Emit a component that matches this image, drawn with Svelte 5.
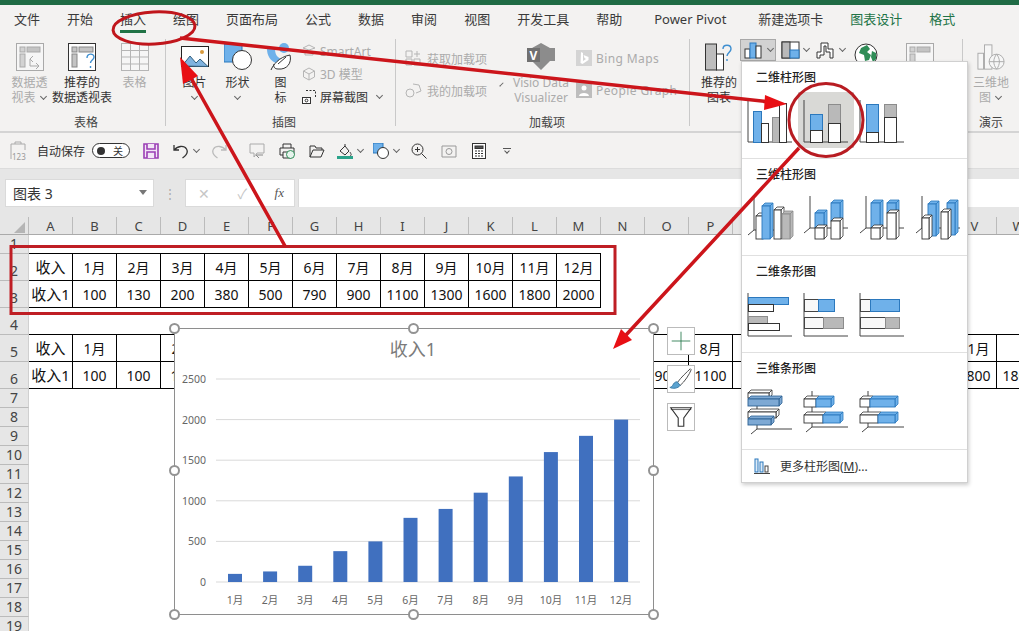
<script>
  const tabs = [
    { t: '文件' }, { t: '开始' }, { t: '插入', on: true }, { t: '绘图' }, { t: '页面布局' }, { t: '公式' },
    { t: '数据' }, { t: '审阅' }, { t: '视图' }, { t: '开发工具' }, { t: '帮助' }, { t: 'Power Pivot', wide: true },
    { t: '新建选项卡' }, { t: '图表设计', green: true }, { t: '格式', green: true }
  ];

  const letters = 'ABCDEFGHIJKLMNOPQRSTUVW'.split('');
  const vals = [100, 130, 200, 380, 500, 790, 900, 1100, 1300, 1600, 1800, 2000];
  const months = vals.map((_, i) => i + 1 + '月');
  const blank = (n) => Array(n).fill('');

  // sheet rows, cell borders are driven by "kind"
  const rows = [
    { n: 1, h: 19, cells: blank(13), kind: 'under' },
    { n: 2, h: 27, cells: ['收入', ...months], kind: 'box' },
    { n: 3, h: 27, cells: ['收入1', ...vals], kind: 'box' },
    { n: 4, h: 27, cells: blank(23), kind: 'under' },
    { n: 5, h: 27, cells: ['收入', '1月', '', '2月', ...blank(11), '8月', ...blank(5), '11月', ''], kind: 'box' },
    { n: 6, h: 27, cells: ['收入1', 100, 100, 130, ...blank(10), 900, 1100, ...blank(5), 1800, 1800], kind: 'box' },
    ...[7, 8, 9, 10, 11, 12, 13, 14, 15, 16, 17, 18, 19].map((n) => ({ n, h: 19, cells: [], kind: '' }))
  ];

  const fills = { b: '#6fb1ea', w: '#ffffff', g: '#b9b9b9', f: '#f8f8f8', d: '#7ea9d4' };
  const edges = { b: '#2b78bd', w: '#333333', g: '#8c8c8c', f: '#444444', d: '#2b5f92' };

  const axis = (x, top, y = 50) => `M${x} ${top}V${y}H50`;
  const floor = (x, top, y = 46) => `M${x} ${top}V${y}M${x - 6} ${y + 5}L${x} ${y}H50`;

  const sections = [
    {
      title: '二维柱形图',
      icons: [
        { axis: axis(6, 8), flat: [[11, 19, 8, 31, 'b'], [19, 31, 7, 19, 'w'], [30, 25, 7, 25, 'g'], [37, 11, 7, 39, 'w']] },
        { axis: axis(6, 8), sel: true, flat: [[12, 22, 12, 16, 'b'], [12, 38, 12, 12, 'w'], [30, 12, 12, 19, 'g'], [30, 31, 12, 19, 'w']] },
        { axis: axis(6, 8), flat: [[12, 12, 12, 28, 'b'], [12, 40, 12, 10, 'w'], [30, 12, 12, 13, 'g'], [30, 25, 12, 25, 'w']] }
      ]
    },
    {
      title: '三维柱形图',
      icons: [
        { axis: floor(12, 8, 41), box: [[14, 27, 7, 23, 'w'], [20, 17, 8, 33, 'b'], [32, 21, 7, 29, 'w'], [40, 25, 8, 25, 'g']] },
        { axis: floor(12, 7, 39), box: [[17, 24, 9, 15, 'b'], [17, 39, 9, 11, 'w'], [33, 14, 9, 18, 'b'], [33, 32, 9, 18, 'w']] },
        { axis: floor(12, 7, 39), box: [[17, 14, 9, 25, 'b'], [17, 39, 9, 11, 'w'], [33, 14, 9, 10, 'b'], [33, 24, 9, 26, 'w']] },
        { axis: floor(12, 7, 39), box: [[18, 15, 8, 32, 'b'], [37, 14, 8, 32, 'b'], [12, 29, 7, 21, 'w'], [31, 23, 7, 27, 'w']] }
      ]
    },
    {
      title: '二维条形图',
      icons: [
        { axis: axis(6, 7), flat: [[6, 11, 40, 7, 'b'], [6, 18, 25, 7, 'w'], [6, 30, 19, 7, 'g'], [6, 37, 31, 7, 'w']] },
        { axis: axis(6, 7), flat: [[6, 13, 14, 12, 'f'], [20, 13, 16, 12, 'b'], [6, 31, 19, 11, 'f'], [25, 31, 20, 11, 'g']] },
        { axis: axis(6, 7), flat: [[6, 13, 10, 12, 'f'], [16, 13, 29, 12, 'b'], [6, 31, 25, 11, 'f'], [31, 31, 14, 11, 'g']] }
      ]
    },
    {
      title: '三维条形图',
      icons: [
        { axis: floor(15, 8), box: [[6, 10, 21, 5, 'w'], [6, 16, 31, 7, 'd'], [6, 29, 28, 6, 'w'], [6, 36, 23, 6, 'd']] },
        { axis: floor(14, 8, 44), box: [[6, 16, 12, 8, 'w'], [18, 16, 15, 8, 'b'], [6, 32, 19, 8, 'w'], [25, 32, 17, 8, 'b']] },
        { axis: floor(14, 8, 44), box: [[6, 16, 10, 8, 'w'], [16, 16, 25, 8, 'b'], [6, 32, 18, 8, 'w'], [24, 32, 17, 8, 'b']] }
      ]
    }
  ];

  const d = 3;
  const topFace = ([x, y, w]) => `${x},${y} ${x + d},${y - d} ${x + w + d},${y - d} ${x + w},${y}`;
  const sideFace = ([x, y, w, h]) => `${x + w},${y} ${x + w + d},${y - d} ${x + w + d},${y + h - d} ${x + w},${y + h}`;

  const ticks = [0, 500, 1000, 1500, 2000, 2500];
  const yAt = (v) => 254 - v * 0.0812;
  const handles = ['tl', 'tc', 'tr', 'ml', 'mr', 'bl', 'bc', 'br'];
</script>

<div class="page">
  <div class="titlebar"></div>

  <nav class="tabs">
    {#each tabs as tab}
      <span class="tab" class:on={tab.on} class:green={tab.green} class:wide={tab.wide}>{tab.t}</span>
    {/each}
  </nav>

  <section class="ribbon">
    <div class="group g1">
      <div class="items">
        <div class="big w45 dim">
          <svg class="ico" viewBox="0 0 28 28" fill="none" stroke="#a9a9a9"><rect x=".5" y=".5" width="27" height="27" fill="#f6f6f6"/><rect x="4" y="4" width="5" height="5" fill="#d2d2d2"/><rect x="11" y="4" width="13" height="5" fill="#c4c4c4"/><rect x="4" y="11" width="5" height="13" fill="#d2d2d2"/><path d="M14 16v7h8M17 13l-3 3 3 3M20 20l3 3-3 3"/></svg>
          <span>数据透</span><span>视表<i class="chev"></i></span>
        </div>
        <div class="big w60">
          <svg class="ico over" viewBox="0 0 28 28" fill="none" stroke="#333"><rect x=".5" y=".5" width="27" height="27" fill="#fff"/><rect x="4" y="4" width="5" height="5" fill="#c4c4c4" stroke="#888"/><rect x="11" y="4" width="14" height="5" fill="#c4c4c4" stroke="#888"/><rect x="4" y="11" width="5" height="13" fill="#c4c4c4" stroke="#888"/><path d="M19 15c0-5 7-5 7-1 0 3-3.500 3-3.500 6M22.500 23v2" stroke="#3f8fd0" stroke-width="1.4"/></svg>
          <span>推荐的</span><span>数据透视表</span>
        </div>
        <div class="big w45 dim">
          <svg class="ico" viewBox="0 0 28 28" fill="#f6f6f6" stroke="#b5b5b5"><rect x=".5" y=".5" width="27" height="27"/><path d="M.5 7.5h27M.5 14h27M.5 21h27M9.5 .5v27M18.5 .5v27"/></svg>
          <span>表格</span>
        </div>
      </div>
      <div class="glabel">表格</div>
    </div>

    <div class="group g2">
      <div class="items">
        <div class="big w43">
          <svg class="ico" viewBox="0 0 28 28" fill="none"><rect x=".5" y="3.5" width="27" height="20" fill="#fff" stroke="#222"/><path d="M1 23l8-10 6 7 4-4 8 7.5z" fill="#7fb2de" stroke="#33607f"/><circle cx="21" cy="9" r="2" fill="#d99a3c"/></svg>
          <span>图片</span><i class="chev down"></i>
        </div>
        <div class="big w43">
          <svg class="ico" viewBox="0 0 28 28"><rect x="0" y="1" width="18" height="18" fill="#6fb1ea" stroke="#2b78bd"/><circle cx="18" cy="17" r="9.5" fill="#fff" stroke="#333"/></svg>
          <span>形状</span><i class="chev down"></i>
        </div>
        <div class="big w43">
          <svg class="ico" viewBox="0 0 28 28" fill="none"><circle cx="17" cy="5" r="5" fill="#6fb1ea"/><path d="M0 6h8c0 8 5 10 9 10v0c-2 4-5 5-8 4-6-2-9-8-9-14z" fill="#6fb1ea"/><path d="M4 27c2-5 8-13 19-15 2 8-3 15-12 14-3 0-5-2-4-5" fill="#fff" stroke="#333"/><path d="M11 21l8-7" stroke="#333"/></svg>
          <span>图</span><span>标</span>
        </div>
        <div class="list tight">
          <div class="li dim">
            <svg class="sm" viewBox="0 0 14 14" fill="none" stroke="#b5b5b5"><path d="M1 4l6-3 6 3-6 2zM3 7v4h8V7"/></svg>SmartArt
          </div>
          <div class="li dim">
            <svg class="sm" viewBox="0 0 14 14" fill="none" stroke="#b5b5b5"><path d="M7 1l5.5 3v6L7 13l-5.5-3V4zM1.5 4L7 7l5.5-3M7 7v6"/></svg>3D 模型
          </div>
          <div class="li">
            <svg class="sm" viewBox="0 0 14 14" fill="none" stroke="#333"><path d="M4 .5h9.5V8" stroke-dasharray="2 1.5"/><rect x=".5" y="7.5" width="8" height="6" fill="#fff"/><circle cx="4.5" cy="10.5" r="1.4"/></svg>屏幕截图<i class="chev"></i>
          </div>
        </div>
      </div>
      <div class="glabel">插图</div>
    </div>

    <div class="group g3">
      <div class="items">
        <div class="list wide dim">
          <div class="li">
            <svg class="sm" viewBox="0 0 18 16" fill="none" stroke="#b5b5b5"><path d="M1 1h6v6H1zM1 9h6v6H1zM9 9h6v6H9zM12 1v6M9 4h6"/></svg>获取加载项
          </div>
          <div class="li">
            <svg class="sm" viewBox="0 0 18 16" fill="none" stroke="#b5b5b5"><circle cx="5" cy="11" r="4"/><path d="M8 2l6 1 2 6-5 2"/></svg>我的加载项<i class="chev gap"></i>
          </div>
        </div>
        <div class="big visio dim">
          <svg class="ico" viewBox="0 0 28 28"><path d="M14 0l9 5h5v13h-5l-9 9-9-9V5z" fill="#8c8c8c"/><rect x="0" y="5" width="13" height="14" fill="#707070"/><text x="2.5" y="16.5" font-size="12" font-weight="700" fill="#fff" font-family="Noto Sans">V</text></svg>
          <span>Visio Data</span><span>Visualizer</span>
        </div>
        <div class="list wide dim en">
          <div class="li">
            <svg class="sm16" viewBox="0 0 16 16"><rect width="16" height="16" fill="#d4d4d4"/><path d="M5 2l2 1v8l3-2-1.5-1 -1-3 5 2v3l-6 4-2-1z" fill="#fff"/></svg>Bing Maps
          </div>
          <div class="li">
            <svg class="sm16" viewBox="0 0 16 16"><rect width="16" height="16" fill="#bdbdbd"/><circle cx="8" cy="6" r="2.5" fill="#fff"/><path d="M3 14c0-4 10-4 10 0z" fill="#fff"/></svg>People Graph
          </div>
        </div>
      </div>
      <div class="glabel">加载项</div>
    </div>

    <div class="group g4">
      <div class="items">
        <div class="big w46">
          <svg class="ico" viewBox="0 0 28 28" fill="none" stroke="#333"><rect x=".5" y="1" width="11" height="26" fill="#bdbdbd"/><rect x="11.5" y="11" width="7" height="16" fill="#fff"/><path d="M18 6c0-5 8-5 8 0 0 3-4 4-4 7M22 16v2" stroke="#3f8fd0" stroke-width="1.4"/></svg>
          <span>推荐的</span><span>图表</span>
        </div>
        <div class="charts">
          <div class="cbtn active">
            <svg class="sm20" viewBox="0 0 20 20" fill="none" stroke="#333"><rect x="1" y="9" width="5" height="9" fill="#fff"/><rect x="6" y="3" width="6" height="15" fill="#6fb1ea" stroke="#2b78bd"/><rect x="12" y="6" width="5" height="12" fill="#fff"/></svg><i class="chev"></i>
          </div>
          <div class="cbtn">
            <svg class="sm20" viewBox="0 0 20 20" fill="none" stroke="#333"><rect x="2" y="2" width="17" height="16" fill="#fff"/><rect x="2" y="2" width="8" height="16" fill="#b9b9b9"/><rect x="10" y="10" width="9" height="8" fill="#6fb1ea" stroke="#2b78bd"/></svg><i class="chev"></i>
          </div>
          <div class="cbtn">
            <svg class="sm20" viewBox="0 0 20 20" fill="none" stroke="#333"><path d="M1 18v-6h4V3h7v6h5v9h-3v-6h-4V6H8v9H4v3z" fill="#fff"/></svg><i class="chev"></i>
          </div>
          <svg class="globe" viewBox="0 0 24 24"><circle cx="12" cy="12" r="11" fill="#fff" stroke="#333"/><path d="M7 5l6-3 3 4-3 3 4 3-2 5-4 1-1-6-5-2z" fill="#2f8d57"/><path d="M18 8l4 2 0 6-3 3-2-5z" fill="#2f8d57"/></svg>
          <svg class="pivot" viewBox="0 0 28 28" fill="#f6f6f6" stroke="#a9a9a9"><rect x=".5" y=".5" width="27" height="27"/><rect x="4" y="4" width="5" height="5" fill="#d2d2d2"/><rect x="11" y="4" width="13" height="5" fill="#c4c4c4"/><rect x="4" y="11" width="5" height="13" fill="#d2d2d2"/></svg>
        </div>
      </div>
    </div>

    <div class="group g5">
      <div class="items">
        <div class="big w57 dim">
          <svg class="ico" viewBox="0 0 30 28" fill="#f6f6f6" stroke="#a9a9a9"><rect x="1" y="10" width="6" height="17"/><rect x="8" y="1" width="8" height="26"/><circle cx="21" cy="19" r="8"/><path d="M13 19h16M21 11c-4 5-4 11 0 16M21 11c4 5 4 11 0 16" fill="none"/></svg>
          <span>三维地</span><span>图<i class="chev"></i></span>
        </div>
      </div>
      <div class="glabel">演示</div>
    </div>
  </section>

  <div class="qat">
    <svg class="q123" viewBox="0 0 16 20" fill="none" stroke="#aaa"><path d="M1 3h14v6M1 3v15M5 3V1h6v2"/><text x="2" y="19" font-size="8" fill="#999" stroke="none" font-family="Noto Sans">123</text></svg>
    <span class="autosave">自动保存</span>
    <span class="toggle"><i></i>关</span>
    <div class="q">
      <svg class="sm16" viewBox="0 0 16 16" fill="#f3e6f7" stroke="#9b3fb5" stroke-width="1.6"><path d="M1 1h14v14H1z"/><path d="M4 1v5h8V1M4 15v-6h8v6"/></svg>
    </div>
    <div class="q w40">
      <svg class="sm16" viewBox="0 0 16 16" fill="none" stroke="#333" stroke-width="1.3"><path d="M1 2v5h5M1.5 7C4 3 11 2 13.5 6c2 3.500-1 7-4 9"/></svg><i class="chev"></i>
    </div>
    <div class="q w26">
      <svg class="sm16" viewBox="0 0 16 16" fill="none" stroke="#bbb" stroke-width="1.3"><path d="M15 2v5h-5M14.500 7C12 3 5 2 2.500 6c-2 3.500 1 7 4 9"/></svg>
    </div>
    <div class="spacer"></div>
    <div class="q">
      <svg class="sm16" viewBox="0 0 16 16" fill="none" stroke="#aaa"><path d="M1 1h14v9H8l-3 4v-4H1z"/><path d="M7 12l3 3M7 12h7" stroke="#888"/></svg>
    </div>
    <div class="q">
      <svg class="sm16" viewBox="0 0 16 16" fill="none" stroke="#333"><path d="M4 5V1h8v4M1 5h14v7h-3M4 12H1V5M4 9h8v6H4z"/><circle cx="11.500" cy="11.500" r="4" fill="#e6f3ec" stroke="#2f8d57"/></svg>
    </div>
    <div class="q">
      <svg class="sm16" viewBox="0 0 16 16" fill="none" stroke="#333"><path d="M1 14V3h5l1 2h6v2M1 14l3-7h11l-3 7z"/></svg>
    </div>
    <div class="q w36">
      <svg class="sm16" viewBox="0 0 16 16" fill="none" stroke="#333"><path d="M3 8l5-5 4 5-4 4zM8 3V1M13 9c1 2 2 3 0 4"/><rect y="13" width="16" height="3" fill="#2aa38a" stroke="none"/></svg><i class="chev"></i>
    </div>
    <div class="q w36">
      <svg class="sm16" viewBox="0 0 16 16"><rect x="0" y="0" width="10" height="10" fill="#6fb1ea" stroke="#2b78bd"/><circle cx="10" cy="10" r="5.500" fill="#fff" stroke="#333"/></svg><i class="chev"></i>
    </div>
    <div class="q">
      <svg class="sm16" viewBox="0 0 16 16" fill="none" stroke="#333"><circle cx="6.500" cy="6.500" r="5.500"/><path d="M10.500 10.500L15.500 15.500M4 6.500h5M6.500 4v5"/></svg>
    </div>
    <div class="q">
      <svg class="sm16" viewBox="0 0 16 16" fill="none" stroke="#999"><path d="M1 3h14v11H1z"/><circle cx="8" cy="8.500" r="3"/></svg>
    </div>
    <div class="q">
      <svg class="sm16" viewBox="0 0 14 16" fill="#fff" stroke="#333"><rect x=".5" y=".5" width="13" height="15"/><rect x="3" y="3" width="8" height="2.500" fill="#555"/><path d="M3 8h8M3 10.500h8M3 13h8" stroke-dasharray="2 1"/></svg>
    </div>
    <div class="q w26"><span class="more"></span></div>
  </div>

  <div class="formula">
    <div class="namebox">图表 3<i class="tri"></i></div>
    <span class="dots">⋮</span>
    <div class="fbtns">
      <span class="x">✕</span><span class="x">✓</span><span class="fx">fx</span>
    </div>
    <div class="finput"></div>
  </div>

  <div class="sheet">
    <div class="colhead">
      <div class="corner"><i></i></div>
      {#each letters as l}<div class="col">{l}</div>{/each}
    </div>

    {#each rows as row}
      <div class="row" class:tall={row.h === 27}>
        <div class="rownum">{row.n}</div>
        {#each row.cells as cell}
          <div class="cell {row.kind}">{cell}</div>
        {/each}
      </div>
    {/each}

    <div class="chart">
      <svg viewBox="0 0 480 287" width="480" height="287">
        <text class="title" x="239" y="28" text-anchor="middle">收入1</text>
        {#each ticks as t}
          <line x1="42" x2="466" y1={yAt(t)} y2={yAt(t)} stroke="#d9d9d9" />
          <text class="tick" x="32" y={yAt(t) + 4} text-anchor="end">{t}</text>
        {/each}
        {#each vals as v, i}
          <rect x={54 + i * 35.1} y={yAt(v)} width="14" height={v * 0.0812} fill="#4070bf" />
          <text class="tick" x={61 + i * 35.1} y="276" text-anchor="middle">{months[i]}</text>
        {/each}
      </svg>
      {#each handles as h}<i class="handle {h}"></i>{/each}
    </div>

    <div class="tool plus">
      <svg viewBox="0 0 28 28" stroke="#217346" stroke-width=".9"><path d="M14 4v20M4 14h20"/></svg>
    </div>
    <div class="tool brush">
      <svg viewBox="0 0 28 28" fill="none"><path d="M24 3c-3 3-10 9-14 15l3 3c5-4 10-12 12-17z" fill="#fff" stroke="#444"/><path d="M10 17c-3 0-4 2-5 4-1 1-2 2-3 2 3 2 9 1 11-2z" fill="#5ba3d0" stroke="#3a7aa5"/></svg>
    </div>
    <div class="tool funnel">
      <svg viewBox="0 0 28 28" fill="#fff" stroke="#333" stroke-width="1.2"><path d="M3 4h22l-8 11v9h-6v-9z"/><path d="M3 6h22" stroke-width=".8"/></svg>
    </div>
  </div>

  <aside class="menu">
    {#each sections as s}
      <div class="msec">
        <h4>{s.title}</h4>
        <div class="mrow">
          {#each s.icons as ic}
            <div class="mcell" class:sel={ic.sel}>
              <svg viewBox="0 0 56 56" width="56" height="56">
                <path d={ic.axis} fill="none" stroke="#444" />
                {#each ic.flat ?? [] as [x, y, w, h, c]}
                  <rect x={x + 0.5} y={y + 0.5} width={w} height={h} fill={fills[c]} stroke={edges[c]} />
                {/each}
                {#each ic.box ?? [] as b}
                  <polygon points={topFace(b)} fill={fills[b[4]]} stroke={edges[b[4]]} stroke-width=".8" />
                  <polygon points={sideFace(b)} fill={fills[b[4]]} stroke={edges[b[4]]} stroke-width=".8" />
                  <rect x={b[0]} y={b[1]} width={b[2]} height={b[3]} fill={fills[b[4]]} stroke={edges[b[4]]} stroke-width=".9" />
                {/each}
              </svg>
            </div>
          {/each}
        </div>
      </div>
    {/each}
    <div class="mfoot">
      <svg viewBox="0 0 16 16" fill="#dceaf7" stroke="#2b78bd"><rect x="1" y="1" width="3" height="13"/><rect x="6" y="4" width="3" height="10"/><rect x="11" y="8" width="3" height="6" fill="#fff" stroke="#444"/><path d="M0 15.500h16" stroke="#444"/></svg>
      <span>更多柱形图(<u>M</u>)...</span>
    </div>
  </aside>

  <svg class="marks" viewBox="0 0 1019 631" width="1019" height="631" fill="none">
    <ellipse cx="154" cy="28" rx="41" ry="16" transform="rotate(-3 154 28)" stroke="#c0161c" stroke-width="3" />
    <rect x="11" y="246.500" width="604" height="67" stroke="#bf1e24" stroke-width="3" />
    <ellipse cx="826" cy="120" rx="37" ry="36.500" stroke="#b81c22" stroke-width="3" />
    <path d="M180 38L770 102M285 246L191 78M799 148L626 335" stroke="#cc151b" stroke-width="3.500" />
    <polygon points="787,104 765,95 764,110" fill="#e80f14" />
    <polygon points="180,57 198,76 183,84" fill="#e80f14" />
    <polygon points="613,349 621,329 632,340" fill="#e80f14" />
  </svg>
</div>

<style>
  :global(body) {
    margin: 0;
    background: #fff;
  }
  .page {
    position: relative;
    width: 1019px;
    height: 631px;
    overflow: hidden;
    font-family: 'Noto Sans', 'Noto Sans CJK SC', sans-serif;
    font-size: 12px;
    color: #333;
    background: #fff;
  }
  i {
    font-style: normal;
  }
  .titlebar {
    height: 5px;
    background: #1f6b45;
  }
  .tabs {
    display: flex;
    gap: 27px;
    height: 32px;
    padding-left: 14px;
    background: #f3f2f1;
    font-size: 13px;
  }
  .tab {
    position: relative;
    line-height: 29px;
    white-space: nowrap;
    color: #3a3a3a;
  }
  .tab.wide {
    margin: 0 5px;
  }
  .tab.green {
    color: #217346;
  }
  .tab.on::after {
    content: '';
    position: absolute;
    left: 0;
    right: 0;
    top: 25px;
    height: 3px;
    background: #217346;
  }

  .ribbon {
    display: flex;
    height: 96px;
    padding: 2px 0 5px;
    box-sizing: border-box;
    background: #f3f2f1;
    border-bottom: 2px solid #d4d4d4;
  }
  .group {
    display: flex;
    flex-direction: column;
    box-sizing: border-box;
    border-right: 1px solid #c9c9c9;
  }
  .g1 { width: 166px; padding-left: 7px; }
  .g2 { width: 230px; padding-left: 7px; }
  .g3 { width: 294px; padding-left: 9px; }
  .g4 { width: 273px; padding-left: 6px; }
  .g5 { width: 56px; border-right: 0; }
  .items {
    display: flex;
    flex: 1;
    padding-top: 4px;
    min-height: 0;
  }
  .glabel {
    height: 15px;
    margin-bottom: -4px;
    line-height: 15px;
    text-align: center;
    color: #444;
  }
  .big {
    display: flex;
    flex-direction: column;
    align-items: center;
    flex: none;
    line-height: 15px;
    white-space: nowrap;
    color: #333;
  }
  .big.dim, .dim {
    color: #ababab;
  }
  .w43 { width: 43px; }
  .w45 { width: 45px; }
  .w46 { width: 46px; }
  .w57 { width: 56px; }
  .w60 { width: 60px; }
  .visio { width: 70px; margin-left: 4px; }
  .ico {
    width: 28px;
    height: 28px;
    margin-bottom: 4px;
    flex: none;
  }
  .ico.over {
    overflow: visible;
  }
  .chev {
    display: inline-block;
    width: 4px;
    height: 4px;
    margin: 0 2px 3px 5px;
    border-right: 1px solid #666;
    border-bottom: 1px solid #666;
    transform: rotate(45deg);
  }
  .chev.down {
    margin: 4px 0 0;
  }
  .chev.gap {
    margin-left: 10px;
  }
  .list {
    display: flex;
    flex-direction: column;
  }
  .list.tight {
    margin-top: -4px;
    padding-top: 1px;
    gap: 1px;
  }
  .list.tight .li {
    height: 22px;
  }
  .list.wide {
    width: 97px;
    padding-top: 7px;
    font-size: 12px;
  }
  .list.wide .li {
    height: 32px;
    align-items: flex-start;
  }
  .list.en {
    width: 110px;
    letter-spacing: .4px;
  }
  .li {
    display: flex;
    align-items: center;
    gap: 4px;
    white-space: nowrap;
  }
  .sm {
    width: 14px;
    height: 14px;
    flex: none;
  }
  .list.wide .sm {
    width: 18px;
    height: 16px;
  }
  .sm16 {
    width: 16px;
    height: 16px;
    flex: none;
  }
  .sm20 {
    width: 20px;
    height: 20px;
    flex: none;
  }
  .charts {
    display: flex;
    align-items: flex-start;
    margin: -4px 0 0 -2px;
    position: relative;
  }
  .cbtn {
    display: flex;
    align-items: center;
    height: 22px;
    width: 36px;
    box-sizing: border-box;
    padding-left: 3px;
    border: 1px solid transparent;
  }
  .cbtn.active {
    background: #d2d2d2;
    border-color: #a8a8a8;
  }
  .cbtn .chev {
    margin: 0 0 3px 4px;
  }
  .globe {
    width: 24px;
    height: 24px;
    margin: 4px 0 0 6px;
    flex: none;
  }
  .pivot {
    width: 28px;
    height: 28px;
    margin: 4px 0 0 28px;
    flex: none;
  }

  .qat {
    display: flex;
    align-items: center;
    height: 35px;
    padding-left: 10px;
    background: #f3f2f1;
  }
  .q123 {
    width: 16px;
    height: 20px;
    flex: none;
  }
  .autosave {
    margin-left: 11px;
    width: 55px;
    white-space: nowrap;
  }
  .toggle {
    display: flex;
    align-items: center;
    justify-content: space-between;
    box-sizing: border-box;
    width: 38px;
    height: 15px;
    padding: 0 6px 0 4px;
    border: 1px solid #333;
    border-radius: 8px;
    font-size: 10px;
    line-height: 1;
    background: #fff;
  }
  .toggle i {
    width: 8px;
    height: 8px;
    border-radius: 50%;
    background: #333;
  }
  .q {
    display: flex;
    align-items: center;
    justify-content: center;
    flex: none;
    width: 30px;
  }
  .q.w26 { width: 26px; }
  .q.w36 { width: 36px; }
  .q.w40 { width: 40px; }
  .toggle + .q { margin-left: 6px; }
  .q .chev { margin: 0 0 3px 5px; }
  .spacer { width: 10px; }
  .more {
    width: 8px;
    height: 4px;
    border-top: 1px solid #555;
    position: relative;
  }
  .more::after {
    content: '';
    position: absolute;
    left: 2px;
    top: 0;
    width: 3px;
    height: 3px;
    border-right: 1px solid #555;
    border-bottom: 1px solid #555;
    transform: rotate(45deg);
  }

  .formula {
    display: flex;
    align-items: flex-end;
    height: 39px;
    box-sizing: border-box;
    background: #e6e6e6;
    border-top: 1px solid #dcdcdc;
  }
  .namebox {
    position: relative;
    box-sizing: border-box;
    width: 149px;
    height: 28px;
    margin-left: 5px;
    padding-left: 7px;
    line-height: 27px;
    font-size: 14px;
    background: #fff;
    border: 1px solid #dadada;
  }
  .tri {
    position: absolute;
    right: 6px;
    top: 10px;
    border: 4px solid transparent;
    border-top: 5px solid #777;
  }
  .dots {
    width: 31px;
    text-align: center;
    line-height: 27px;
    color: #aaa;
  }
  .fbtns {
    display: flex;
    align-items: center;
    justify-content: space-between;
    box-sizing: border-box;
    width: 110px;
    height: 28px;
    padding: 0 10px 0 12px;
    background: #fff;
    border: 1px solid #dadada;
  }
  .x {
    color: #c6c6c6;
    font-size: 14px;
  }
  .fx {
    font: italic 13px 'Liberation Serif', serif;
    color: #555;
  }
  .finput {
    flex: 1;
    height: 28px;
    margin-left: 3px;
    background: #fff;
    border-left: 1px solid #dadada;
  }

  .sheet {
    position: absolute;
    left: 0;
    top: 207px;
    width: 1019px;
    height: 424px;
    overflow: hidden;
    background: #fff;
  }
  .colhead {
    display: flex;
    height: 28px;
    box-sizing: border-box;
    padding-top: 10px;
    background: #e6e6e6;
    border-bottom: 1px solid #aaa;
  }
  .corner {
    position: relative;
    width: 29px;
    flex: none;
    box-sizing: border-box;
    border-right: 1px solid #bbb;
  }
  .corner i {
    position: absolute;
    right: 3px;
    bottom: 1px;
    border-left: 11px solid transparent;
    border-bottom: 11px solid #b5b5b5;
  }
  .col {
    width: 44px;
    flex: none;
    box-sizing: border-box;
    text-align: center;
    font-size: 13px;
    line-height: 18px;
    border-right: 1px solid #bbb;
    color: #444;
  }
  .row {
    display: flex;
    height: 19px;
  }
  .row.tall {
    height: 27px;
  }
  .rownum {
    display: flex;
    align-items: flex-end;
    justify-content: center;
    width: 29px;
    flex: none;
    box-sizing: border-box;
    font-size: 14px;
    line-height: 18px;
    color: #444;
    background: #e6e6e6;
    border-bottom: 1px solid #bbb;
    border-right: 1px solid #d0d0d0;
  }
  .cell {
    width: 44px;
    flex: none;
    box-sizing: border-box;
    text-align: center;
    white-space: nowrap;
    overflow: visible;
    font-size: 14px;
    color: #111;
  }
  .cell.under {
    border-bottom: 1px solid #000;
  }
  .cell.box {
    line-height: 27px;
    border-right: 1px solid #000;
    border-bottom: 1px solid #000;
  }
  .cell.box:nth-child(2) {
    font-size: 15px;
  }

  .chart {
    position: absolute;
    left: 174px;
    top: 121px;
    width: 480px;
    height: 287px;
    box-sizing: border-box;
    background: #fff;
    border: 1.5px solid #8e8e8e;
  }
  .chart svg {
    display: block;
    margin: -1.5px;
  }
  .title {
    font-size: 18px;
    fill: #7b7b7b;
  }
  .tick {
    font-size: 10.5px;
    fill: #666;
  }
  .handle {
    position: absolute;
    width: 11px;
    height: 11px;
    box-sizing: border-box;
    margin: -6.5px;
    border: 2px solid #939393;
    border-radius: 50%;
    background: #fff;
  }
  .tl, .tc, .tr { top: 0; }
  .ml, .mr { top: 50%; }
  .bl, .bc, .br { top: calc(100% + 1px); }
  .tl, .ml, .bl { left: 0; }
  .tc, .bc { left: 50%; }
  .tr, .mr, .br { left: calc(100% + 1px); }

  .tool {
    position: absolute;
    left: 667px;
    width: 28px;
    height: 28px;
    box-sizing: border-box;
    background: #fff;
    border: 1px solid #bbb;
  }
  .tool svg {
    display: block;
    width: 26px;
    height: 26px;
  }
  .plus { top: 120px; }
  .brush { top: 158px; }
  .funnel { top: 196px; }

  .menu {
    position: absolute;
    left: 741px;
    top: 61px;
    width: 227px;
    height: 422px;
    box-sizing: border-box;
    background: #fff;
    border: 1px solid #d0d0d0;
    box-shadow: 1px 2px 4px rgba(0, 0, 0, .2);
  }
  .msec {
    height: 97px;
    box-sizing: border-box;
    border-bottom: 1px solid #e0e0e0;
  }
  h4 {
    margin: 0;
    height: 30px;
    padding-left: 14px;
    line-height: 32px;
    font-size: 12px;
    font-weight: 500;
    color: #222;
  }
  .mrow {
    display: flex;
  }
  .mcell {
    width: 56px;
    height: 56px;
  }
  .mcell svg {
    display: block;
  }
  .mcell.sel {
    background: #d9d9d6;
  }
  .mfoot {
    display: flex;
    align-items: center;
    gap: 10px;
    height: 31px;
    padding-left: 12px;
    color: #333;
  }
  .mfoot svg {
    width: 16px;
    height: 16px;
  }
  .marks {
    position: absolute;
    left: 0;
    top: 0;
    pointer-events: none;
  }
</style>
